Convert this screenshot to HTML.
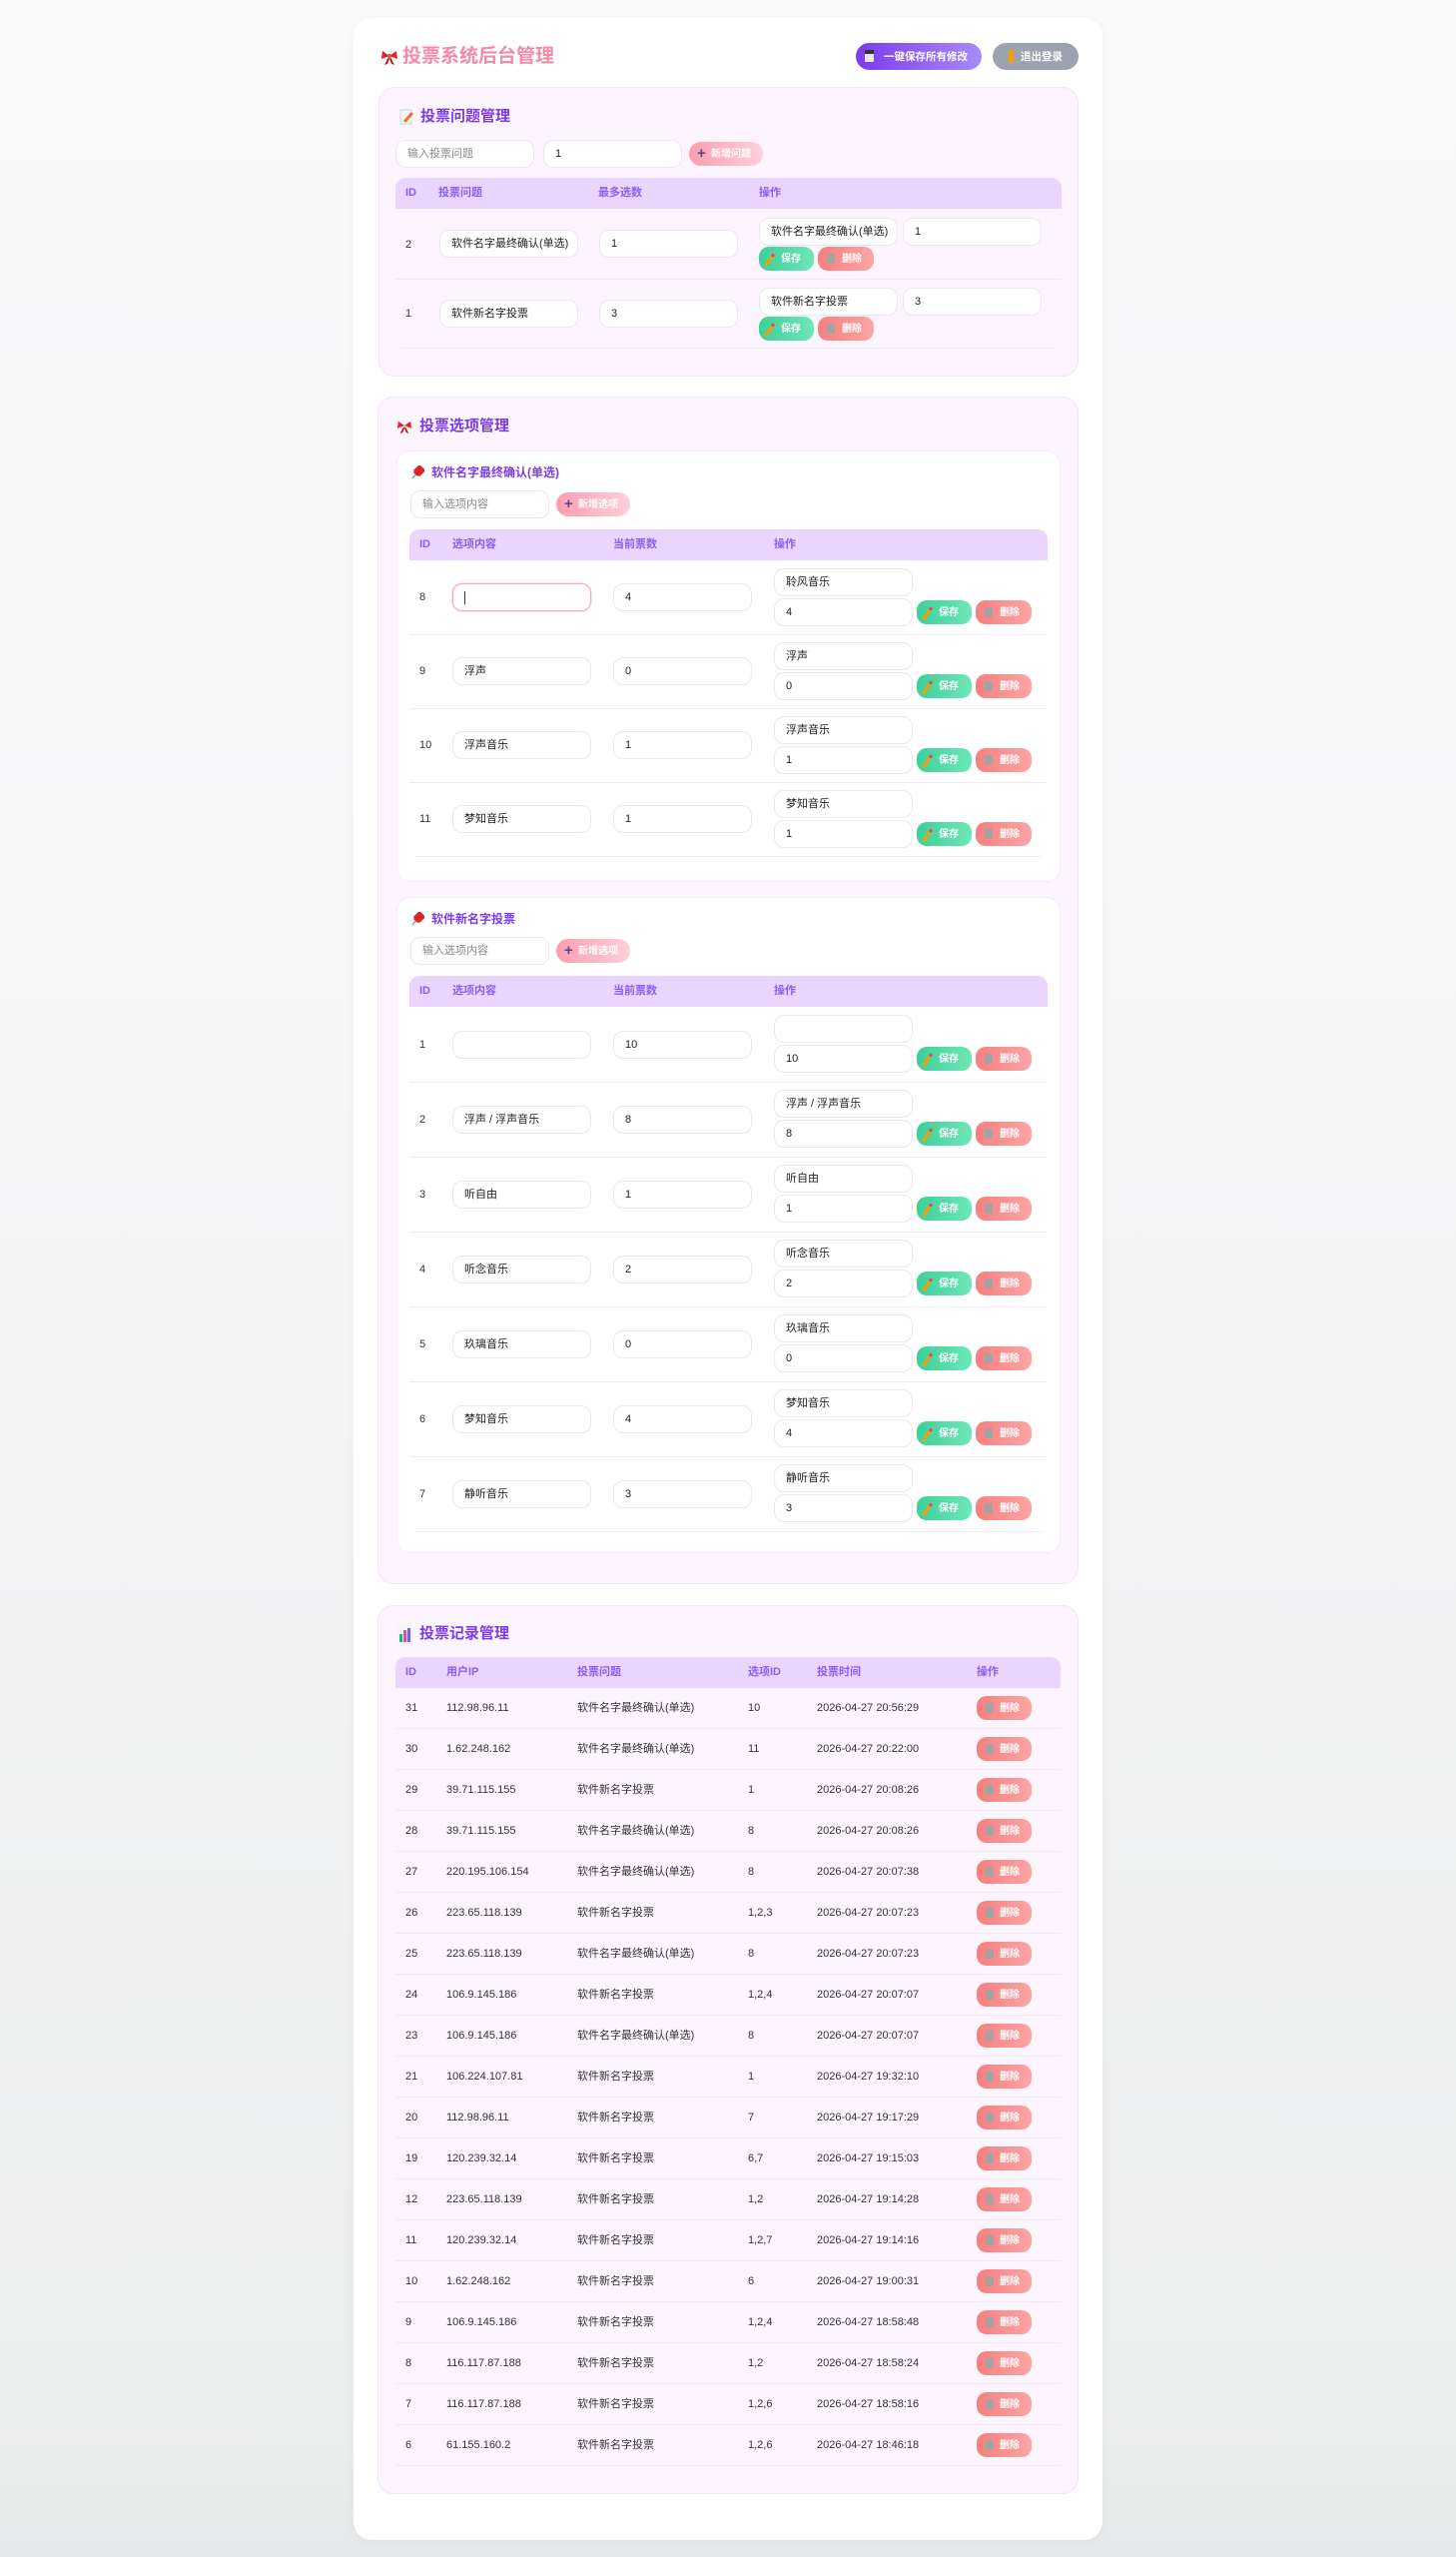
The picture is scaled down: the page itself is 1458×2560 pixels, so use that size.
<!DOCTYPE html>
<html><head><meta charset="utf-8"><style>
*{margin:0;padding:0;box-sizing:border-box}
body{width:1458px;height:2560px;position:relative;overflow:hidden;font-family:"Liberation Sans","Noto Sans CJK SC",sans-serif;background:linear-gradient(180deg,#fbfafb 0%,#f3f3f4 60%,#eceded 95%,#e6e8e9 100%);color:#333}
.a{position:absolute}
.card{left:354px;top:18px;width:750px;height:2525px;background:#fff;border-radius:18px;box-shadow:0 2px 10px rgba(0,0,0,.04)}
.title{left:403px;top:44px;font-size:19px;font-weight:bold;color:#f58aa6;line-height:26px}
.hb{height:27px;border-radius:14px;color:#fff;font-size:10.5px;font-weight:bold;line-height:28px;text-align:center}
.panel{background:#fcf5fe;border:1px solid #f3e6fb;border-radius:16px}
.h2{font-size:15px;font-weight:bold;color:#7c3aed;line-height:20px}
.h3{font-size:12px;font-weight:bold;color:#7c3aed;line-height:16px}
.sub{background:#fff;border:1px solid #f3ecf8;border-radius:14px}
.inp{width:139px;height:28px;border:1px solid #ebe7f0;border-radius:10px;background:#fff;font-size:11px;padding-left:11px;line-height:26px;color:#222}
.ph{color:#888}
.add{height:24px;border-radius:12px;background:linear-gradient(90deg,#fb9eb0,#fecfdb);color:#fff;font-size:10px;font-weight:bold;line-height:26px;padding-left:22px}
.add:before{content:"+";position:absolute;left:8px;top:0px;line-height:24px;font-size:15px;color:#5b4a8a;font-weight:bold}
.th{background:#e9d5fe;border-radius:10px 10px 0 0;height:31px}
.tht{font-size:11px;font-weight:bold;color:#8b5cf6;line-height:31px}
.td{font-size:11px;color:#333;line-height:14px}
.ln{height:1px;background:#f1e8f8}
.sv{width:55px;height:24px;border-radius:10px;background:linear-gradient(90deg,#3ecf98,#6ee7b7);color:#fff;font-size:10px;font-weight:bold;line-height:26px;padding-left:22px}
.dl{width:56px;height:24px;border-radius:10px;background:linear-gradient(90deg,#f77f7f,#fca5a5);color:#fff;font-size:10px;font-weight:bold;line-height:26px;padding-left:24px}
.sv:before{content:"";position:absolute;left:9px;top:6px;width:3px;height:12px;background:#f59e0b;transform:rotate(35deg);border-top:3px solid #ef4444}
.dl:before{content:"";position:absolute;left:9px;top:7px;width:8px;height:10px;background:#a3a3a3;border-radius:1px}
.foc{border:1px solid #f9a8c0;box-shadow:0 0 0 1px #fde2ea}
</style></head><body>
<div class="a card"></div>
<svg class="a" style="left:381px;top:48px" width="18" height="18" viewBox="0 0 18 18"><path d="M9 8 L2 3 L1 11 Z M9 8 L16 3 L17 11 Z" fill="#dc2626"/><path d="M8 9 L4 17 L7 16 L9 11 Z M10 9 L14 17 L11 16 L9 11Z" fill="#b91c1c"/><circle cx="9" cy="8" r="2" fill="#ef4444"/></svg>
<div class="a title">投票系统后台管理</div>
<div class="a hb" style="left:857px;top:43px;width:126px;background:linear-gradient(90deg,#7c3aed,#a78bfa);padding-left:14px">一键保存所有修改</div>
<div class="a" style="left:866px;top:50px;width:9px;height:12px;background:#e5e7eb;border-radius:1px;border-top:4px solid #333"></div>
<div class="a hb" style="left:994px;top:43px;width:86px;background:#9ca3af;padding-left:12px">退出登录</div>
<div class="a" style="left:1010px;top:50px;width:5px;height:13px;background:#f59e0b;border-radius:1px"></div>

<div class="a panel" style="left:379px;top:87px;width:701px;height:290px"></div>
<svg class="a" style="left:400px;top:109px" width="15" height="16" viewBox="0 0 15 16"><rect x="1" y="1" width="11" height="14" fill="#f3f4f6" stroke="#cbd5e1"/><path d="M5 13 L13 4" stroke="#f97316" stroke-width="3"/></svg>
<div class="a h2" style="left:421px;top:107px">投票问题管理</div>
<div class="a inp ph" style="left:396px;top:140px">输入投票问题</div>
<div class="a inp" style="left:544px;top:140px">1</div>
<div class="a add" style="left:690px;top:142px;width:74px">新增问题</div>
<div class="a th" style="left:396px;top:178px;width:667px"></div>
<div class="a tht" style="left:406px;top:178px">ID</div>
<div class="a tht" style="left:439px;top:178px">投票问题</div>
<div class="a tht" style="left:599px;top:178px">最多选数</div>
<div class="a tht" style="left:760px;top:178px">操作</div>

<div class="a td" style="left:406px;top:238px">2</div>
<div class="a inp" style="left:440px;top:230px">软件名字最终确认(单选)</div>
<div class="a inp" style="left:600px;top:230px">1</div>
<div class="a inp" style="left:760px;top:218px">软件名字最终确认(单选)</div>
<div class="a inp" style="left:904px;top:218px">1</div>
<div class="a sv" style="left:760px;top:247px">保存</div>
<div class="a dl" style="left:819px;top:247px">删除</div>
<div class="a ln" style="left:396px;top:279px;width:667px"></div>

<div class="a td" style="left:406px;top:307px">1</div>
<div class="a inp" style="left:440px;top:300px">软件新名字投票</div>
<div class="a inp" style="left:600px;top:300px">3</div>
<div class="a inp" style="left:760px;top:288px">软件新名字投票</div>
<div class="a inp" style="left:904px;top:288px">3</div>
<div class="a sv" style="left:760px;top:317px">保存</div>
<div class="a dl" style="left:819px;top:317px">删除</div>
<div class="a ln" style="left:402px;top:348px;width:655px"></div>

<div class="a panel" style="left:378px;top:397px;width:702px;height:1189px"></div>
<svg class="a" style="left:397px;top:420px" width="16" height="14" viewBox="0 0 18 16"><path d="M9 7 L2 2 L1 10 Z M9 7 L16 2 L17 10 Z" fill="#dc2626"/><path d="M8 8 L4 16 L7 15 L9 10 Z M10 8 L14 16 L11 15 L9 10Z" fill="#b91c1c"/></svg>
<div class="a h2" style="left:420px;top:417px">投票选项管理</div>

<div class="a sub" style="left:397px;top:451px;width:665px;height:432px"></div>
<svg class="a" style="left:411px;top:466px" width="14" height="14" viewBox="0 0 14 14"><path d="M2 13 L6 8" stroke="#9ca3af" stroke-width="1.5"/><path d="M5 5 L9 1 L13 5 L9 9 Z M4 6 L8 10" stroke="#dc2626" stroke-width="3" fill="#dc2626"/></svg>
<div class="a h3" style="left:432px;top:465px">软件名字最终确认(单选)</div>
<div class="a inp ph" style="left:411px;top:491px">输入选项内容</div>
<div class="a add" style="left:557px;top:493px;width:74px">新增选项</div>
<div class="a th" style="left:410px;top:530px;width:639px"></div>
<div class="a tht" style="left:420px;top:530px">ID</div>
<div class="a tht" style="left:453px;top:530px">选项内容</div>
<div class="a tht" style="left:614px;top:530px">当前票数</div>
<div class="a tht" style="left:775px;top:530px">操作</div>

<div class="a td" style="left:420px;top:591px">8</div>
<div class="a inp foc" style="left:453px;top:584px"><span style="display:inline-block;width:1px;height:13px;background:#333;vertical-align:middle"></span></div>
<div class="a inp" style="left:614px;top:584px">4</div>
<div class="a inp" style="left:775px;top:569px">聆风音乐</div>
<div class="a inp" style="left:775px;top:599px">4</div>
<div class="a sv" style="left:918px;top:601px">保存</div>
<div class="a dl" style="left:977px;top:601px">删除</div>
<div class="a ln" style="left:410px;top:635px;width:639px"></div>

<div class="a td" style="left:420px;top:665px">9</div>
<div class="a inp" style="left:453px;top:658px">浮声</div>
<div class="a inp" style="left:614px;top:658px">0</div>
<div class="a inp" style="left:775px;top:643px">浮声</div>
<div class="a inp" style="left:775px;top:673px">0</div>
<div class="a sv" style="left:918px;top:675px">保存</div>
<div class="a dl" style="left:977px;top:675px">删除</div>
<div class="a ln" style="left:410px;top:709px;width:639px"></div>

<div class="a td" style="left:420px;top:739px">10</div>
<div class="a inp" style="left:453px;top:732px">浮声音乐</div>
<div class="a inp" style="left:614px;top:732px">1</div>
<div class="a inp" style="left:775px;top:717px">浮声音乐</div>
<div class="a inp" style="left:775px;top:747px">1</div>
<div class="a sv" style="left:918px;top:749px">保存</div>
<div class="a dl" style="left:977px;top:749px">删除</div>
<div class="a ln" style="left:410px;top:783px;width:639px"></div>

<div class="a td" style="left:420px;top:813px">11</div>
<div class="a inp" style="left:453px;top:806px">梦知音乐</div>
<div class="a inp" style="left:614px;top:806px">1</div>
<div class="a inp" style="left:775px;top:791px">梦知音乐</div>
<div class="a inp" style="left:775px;top:821px">1</div>
<div class="a sv" style="left:918px;top:823px">保存</div>
<div class="a dl" style="left:977px;top:823px">删除</div>
<div class="a ln" style="left:416px;top:857px;width:627px"></div>

<div class="a sub" style="left:397px;top:898px;width:665px;height:657px"></div>
<svg class="a" style="left:411px;top:913px" width="14" height="14" viewBox="0 0 14 14"><path d="M2 13 L6 8" stroke="#9ca3af" stroke-width="1.5"/><path d="M5 5 L9 1 L13 5 L9 9 Z M4 6 L8 10" stroke="#dc2626" stroke-width="3" fill="#dc2626"/></svg>
<div class="a h3" style="left:432px;top:912px">软件新名字投票</div>
<div class="a inp ph" style="left:411px;top:938px">输入选项内容</div>
<div class="a add" style="left:557px;top:940px;width:74px">新增选项</div>
<div class="a th" style="left:410px;top:977px;width:639px"></div>
<div class="a tht" style="left:420px;top:977px">ID</div>
<div class="a tht" style="left:453px;top:977px">选项内容</div>
<div class="a tht" style="left:614px;top:977px">当前票数</div>
<div class="a tht" style="left:775px;top:977px">操作</div>

<div class="a td" style="left:420px;top:1039px">1</div>
<div class="a inp" style="left:453px;top:1032px"></div>
<div class="a inp" style="left:614px;top:1032px">10</div>
<div class="a inp" style="left:775px;top:1016px"></div>
<div class="a inp" style="left:775px;top:1046px">10</div>
<div class="a sv" style="left:918px;top:1048px">保存</div>
<div class="a dl" style="left:977px;top:1048px">删除</div>
<div class="a ln" style="left:410px;top:1083px;width:639px"></div>

<div class="a td" style="left:420px;top:1114px">2</div>
<div class="a inp" style="left:453px;top:1107px">浮声 / 浮声音乐</div>
<div class="a inp" style="left:614px;top:1107px">8</div>
<div class="a inp" style="left:775px;top:1091px">浮声 / 浮声音乐</div>
<div class="a inp" style="left:775px;top:1121px">8</div>
<div class="a sv" style="left:918px;top:1123px">保存</div>
<div class="a dl" style="left:977px;top:1123px">删除</div>
<div class="a ln" style="left:410px;top:1158px;width:639px"></div>

<div class="a td" style="left:420px;top:1189px">3</div>
<div class="a inp" style="left:453px;top:1182px">听自由</div>
<div class="a inp" style="left:614px;top:1182px">1</div>
<div class="a inp" style="left:775px;top:1166px">听自由</div>
<div class="a inp" style="left:775px;top:1196px">1</div>
<div class="a sv" style="left:918px;top:1198px">保存</div>
<div class="a dl" style="left:977px;top:1198px">删除</div>
<div class="a ln" style="left:410px;top:1233px;width:639px"></div>

<div class="a td" style="left:420px;top:1264px">4</div>
<div class="a inp" style="left:453px;top:1257px">听念音乐</div>
<div class="a inp" style="left:614px;top:1257px">2</div>
<div class="a inp" style="left:775px;top:1241px">听念音乐</div>
<div class="a inp" style="left:775px;top:1271px">2</div>
<div class="a sv" style="left:918px;top:1273px">保存</div>
<div class="a dl" style="left:977px;top:1273px">删除</div>
<div class="a ln" style="left:410px;top:1308px;width:639px"></div>

<div class="a td" style="left:420px;top:1339px">5</div>
<div class="a inp" style="left:453px;top:1332px">玖璃音乐</div>
<div class="a inp" style="left:614px;top:1332px">0</div>
<div class="a inp" style="left:775px;top:1316px">玖璃音乐</div>
<div class="a inp" style="left:775px;top:1346px">0</div>
<div class="a sv" style="left:918px;top:1348px">保存</div>
<div class="a dl" style="left:977px;top:1348px">删除</div>
<div class="a ln" style="left:410px;top:1383px;width:639px"></div>

<div class="a td" style="left:420px;top:1414px">6</div>
<div class="a inp" style="left:453px;top:1407px">梦知音乐</div>
<div class="a inp" style="left:614px;top:1407px">4</div>
<div class="a inp" style="left:775px;top:1391px">梦知音乐</div>
<div class="a inp" style="left:775px;top:1421px">4</div>
<div class="a sv" style="left:918px;top:1423px">保存</div>
<div class="a dl" style="left:977px;top:1423px">删除</div>
<div class="a ln" style="left:410px;top:1458px;width:639px"></div>

<div class="a td" style="left:420px;top:1489px">7</div>
<div class="a inp" style="left:453px;top:1482px">静听音乐</div>
<div class="a inp" style="left:614px;top:1482px">3</div>
<div class="a inp" style="left:775px;top:1466px">静听音乐</div>
<div class="a inp" style="left:775px;top:1496px">3</div>
<div class="a sv" style="left:918px;top:1498px">保存</div>
<div class="a dl" style="left:977px;top:1498px">删除</div>
<div class="a ln" style="left:416px;top:1533px;width:627px"></div>

<div class="a panel" style="left:378px;top:1607px;width:702px;height:890px"></div>
<svg class="a" style="left:398px;top:1628px" width="15" height="16" viewBox="0 0 15 16"><rect x="0" y="0" width="15" height="16" fill="#f3f4f6"/><rect x="2" y="8" width="3" height="8" fill="#10b981"/><rect x="6" y="4" width="3" height="12" fill="#ec4899"/><rect x="10" y="2" width="3" height="14" fill="#6366f1"/></svg>
<div class="a h2" style="left:420px;top:1626px">投票记录管理</div>
<div class="a th" style="left:396px;top:1659px;width:666px"></div>
<div class="a tht" style="left:406px;top:1659px">ID</div>
<div class="a tht" style="left:447px;top:1659px">用户IP</div>
<div class="a tht" style="left:578px;top:1659px">投票问题</div>
<div class="a tht" style="left:749px;top:1659px">选项ID</div>
<div class="a tht" style="left:818px;top:1659px">投票时间</div>
<div class="a tht" style="left:978px;top:1659px">操作</div>

<div class="a" style="left:396px;top:1690px;width:666px">
<style>
.r{position:relative;height:41px;border-bottom:1px solid #f1e8f8;font-size:11px;color:#333}
.r span{position:absolute;top:13px;line-height:14px}
.r .d{position:absolute;left:582px;top:8px;width:55px;height:24px;border-radius:10px;background:linear-gradient(90deg,#f77f7f,#fca5a5);color:#fff;font-size:10px;font-weight:bold;line-height:26px;padding-left:23px}
.r .d:before{content:"";position:absolute;left:9px;top:7px;width:8px;height:10px;background:#a3a3a3;border-radius:1px}
</style>
<div class="r"><span style="left:10px">31</span><span style="left:51px">112.98.96.11</span><span style="left:182px">软件名字最终确认(单选)</span><span style="left:353px">10</span><span style="left:422px">2026-04-27 20:56:29</span><div class="d">删除</div></div>
<div class="r"><span style="left:10px">30</span><span style="left:51px">1.62.248.162</span><span style="left:182px">软件名字最终确认(单选)</span><span style="left:353px">11</span><span style="left:422px">2026-04-27 20:22:00</span><div class="d">删除</div></div>
<div class="r"><span style="left:10px">29</span><span style="left:51px">39.71.115.155</span><span style="left:182px">软件新名字投票</span><span style="left:353px">1</span><span style="left:422px">2026-04-27 20:08:26</span><div class="d">删除</div></div>
<div class="r"><span style="left:10px">28</span><span style="left:51px">39.71.115.155</span><span style="left:182px">软件名字最终确认(单选)</span><span style="left:353px">8</span><span style="left:422px">2026-04-27 20:08:26</span><div class="d">删除</div></div>
<div class="r"><span style="left:10px">27</span><span style="left:51px">220.195.106.154</span><span style="left:182px">软件名字最终确认(单选)</span><span style="left:353px">8</span><span style="left:422px">2026-04-27 20:07:38</span><div class="d">删除</div></div>
<div class="r"><span style="left:10px">26</span><span style="left:51px">223.65.118.139</span><span style="left:182px">软件新名字投票</span><span style="left:353px">1,2,3</span><span style="left:422px">2026-04-27 20:07:23</span><div class="d">删除</div></div>
<div class="r"><span style="left:10px">25</span><span style="left:51px">223.65.118.139</span><span style="left:182px">软件名字最终确认(单选)</span><span style="left:353px">8</span><span style="left:422px">2026-04-27 20:07:23</span><div class="d">删除</div></div>
<div class="r"><span style="left:10px">24</span><span style="left:51px">106.9.145.186</span><span style="left:182px">软件新名字投票</span><span style="left:353px">1,2,4</span><span style="left:422px">2026-04-27 20:07:07</span><div class="d">删除</div></div>
<div class="r"><span style="left:10px">23</span><span style="left:51px">106.9.145.186</span><span style="left:182px">软件名字最终确认(单选)</span><span style="left:353px">8</span><span style="left:422px">2026-04-27 20:07:07</span><div class="d">删除</div></div>
<div class="r"><span style="left:10px">21</span><span style="left:51px">106.224.107.81</span><span style="left:182px">软件新名字投票</span><span style="left:353px">1</span><span style="left:422px">2026-04-27 19:32:10</span><div class="d">删除</div></div>
<div class="r"><span style="left:10px">20</span><span style="left:51px">112.98.96.11</span><span style="left:182px">软件新名字投票</span><span style="left:353px">7</span><span style="left:422px">2026-04-27 19:17:29</span><div class="d">删除</div></div>
<div class="r"><span style="left:10px">19</span><span style="left:51px">120.239.32.14</span><span style="left:182px">软件新名字投票</span><span style="left:353px">6,7</span><span style="left:422px">2026-04-27 19:15:03</span><div class="d">删除</div></div>
<div class="r"><span style="left:10px">12</span><span style="left:51px">223.65.118.139</span><span style="left:182px">软件新名字投票</span><span style="left:353px">1,2</span><span style="left:422px">2026-04-27 19:14:28</span><div class="d">删除</div></div>
<div class="r"><span style="left:10px">11</span><span style="left:51px">120.239.32.14</span><span style="left:182px">软件新名字投票</span><span style="left:353px">1,2,7</span><span style="left:422px">2026-04-27 19:14:16</span><div class="d">删除</div></div>
<div class="r"><span style="left:10px">10</span><span style="left:51px">1.62.248.162</span><span style="left:182px">软件新名字投票</span><span style="left:353px">6</span><span style="left:422px">2026-04-27 19:00:31</span><div class="d">删除</div></div>
<div class="r"><span style="left:10px">9</span><span style="left:51px">106.9.145.186</span><span style="left:182px">软件新名字投票</span><span style="left:353px">1,2,4</span><span style="left:422px">2026-04-27 18:58:48</span><div class="d">删除</div></div>
<div class="r"><span style="left:10px">8</span><span style="left:51px">116.117.87.188</span><span style="left:182px">软件新名字投票</span><span style="left:353px">1,2</span><span style="left:422px">2026-04-27 18:58:24</span><div class="d">删除</div></div>
<div class="r"><span style="left:10px">7</span><span style="left:51px">116.117.87.188</span><span style="left:182px">软件新名字投票</span><span style="left:353px">1,2,6</span><span style="left:422px">2026-04-27 18:58:16</span><div class="d">删除</div></div>
<div class="r"><span style="left:10px">6</span><span style="left:51px">61.155.160.2</span><span style="left:182px">软件新名字投票</span><span style="left:353px">1,2,6</span><span style="left:422px">2026-04-27 18:46:18</span><div class="d">删除</div></div>
</div>
</body></html>
